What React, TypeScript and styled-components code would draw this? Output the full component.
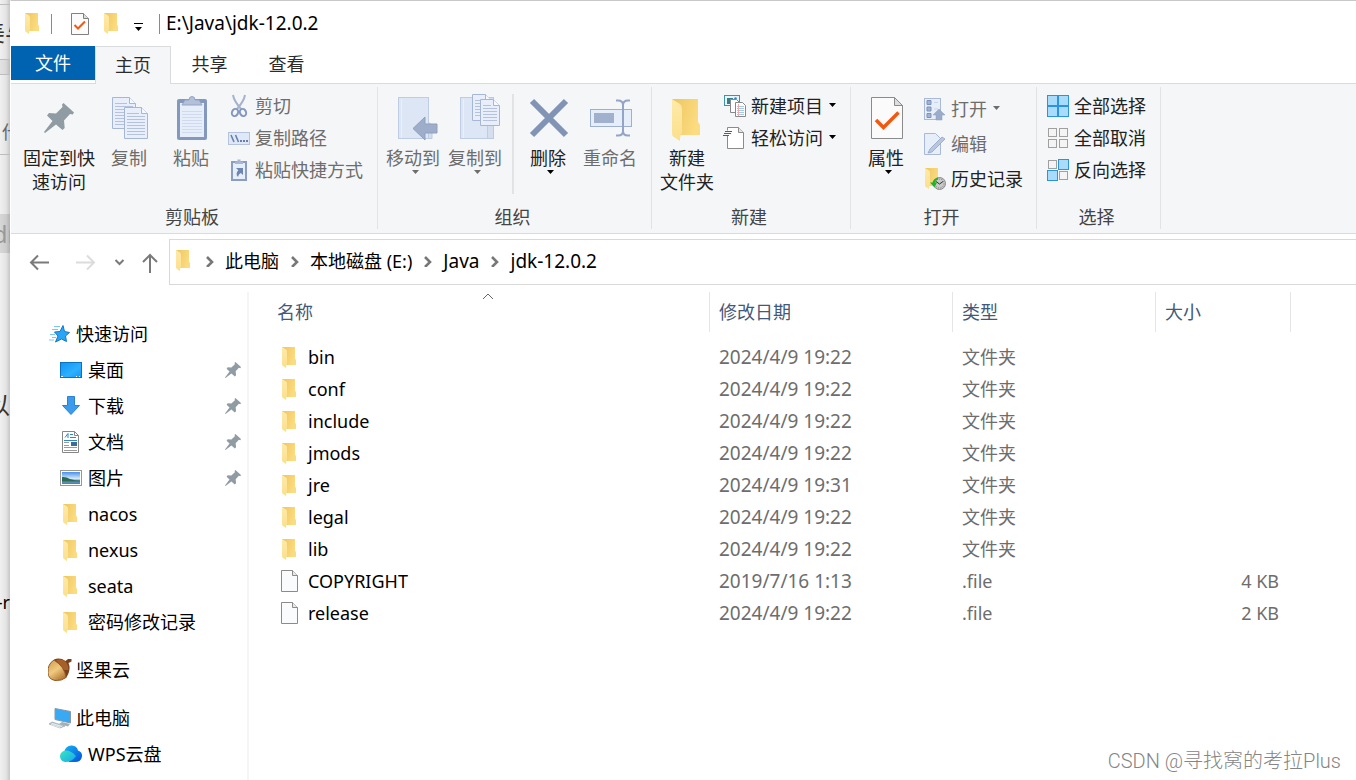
import React from "react";
import styled, { createGlobalStyle } from "styled-components";

const GlobalStyle = createGlobalStyle`
  *, *::before, *::after { box-sizing: border-box; }
  html, body, #root { height: 100%; }
  body {
    margin: 0;
    overflow: hidden;
    background: #fff;
    color: #000;
    font: 18px/24px "Noto Sans", "Noto Sans CJK SC", sans-serif;
  }
  button, input {
    font: inherit;
    color: inherit;
    background: none;
    border: 0;
    padding: 0;
    margin: 0;
  }
  svg { display: block; flex: none; }
`;

/* ---------- layout ---------- */

const Desktop = styled.div`
  position: relative;
  display: flex;
  height: 100%;
  min-height: 100vh;
  overflow: hidden;
`;

const BehindWindow = styled.aside`
  flex: 0 0 10px;
  display: flex;
  flex-direction: column;
  overflow: hidden;
  background: linear-gradient(to right, #f0f0f0, #e4e4e4 60%, #c6c6c6);
  white-space: nowrap;
`;

const BehindStrip = styled.div<{
  $height: number;
  $shade?: string;
  $line?: boolean;
  $align?: string;
  $color?: string;
  $large?: boolean;
}>`
  flex: none;
  height: ${(p) => p.$height}px;
  display: flex;
  align-items: center;
  justify-content: ${(p) => p.$align || "flex-start"};
  background: ${(p) => p.$shade || "transparent"};
  border-bottom: ${(p) => (p.$line ? "1px solid #bdbdbd" : "0")};
  color: ${(p) => p.$color || "#333"};
  font-size: ${(p) => (p.$large ? 24 : 18)}px;
  overflow: hidden;
`;

const Window = styled.main`
  flex: 1;
  min-width: 0;
  display: flex;
  flex-direction: column;
  background: #fff;
  border-top: 1px solid #c8c8c8;
  border-left: 1px solid #fff;
`;

const TitleBar = styled.header`
  flex: none;
  height: 45px;
  display: flex;
  align-items: center;
  padding-left: 14px;
`;

const TitleTool = styled.button<{ $gap: number }>`
  height: 24px;
  display: flex;
  align-items: center;
  margin-right: ${(p) => p.$gap}px;
`;

const TitleDivider = styled.span<{ $gap: number }>`
  width: 1px;
  height: 20px;
  background: #8a8a8a;
  margin-right: ${(p) => p.$gap}px;
`;

const Title = styled.h1`
  margin: 0;
  padding-bottom: 2px;
  font-size: 19px;
  font-weight: 400;
  line-height: 24px;
`;

const TabBar = styled.nav`
  flex: none;
  display: flex;
  height: 38px;
  border-bottom: 1px solid #dadbdc;
`;

const FileTab = styled.button`
  width: 84px;
  height: 34px;
  color: #fff;
  background: #0063b1;
`;

const Tab = styled.button<{ $active?: boolean }>`
  width: ${(p) => (p.$active ? 76 : 77)}px;
  height: 38px;
  padding-bottom: 2px;
  color: #2b2b2b;
  background: ${(p) => (p.$active ? "#f5f6f7" : "transparent")};
  border: ${(p) => (p.$active ? "1px solid #dadbdc" : "0")};
  border-bottom: 0;
`;

const Ribbon = styled.section`
  flex: none;
  display: flex;
  height: 150px;
  padding: 3px 0 4px;
  background: #f5f6f7;
  border-bottom: 1px solid #dadbdc;
`;

const Group = styled.div<{ $width: number }>`
  flex: none;
  width: ${(p) => p.$width}px;
  display: flex;
  flex-direction: column;
  justify-content: space-between;
  border-right: 1px solid #e2e3e4;
`;

const GroupTools = styled.div<{ $inset?: number }>`
  display: flex;
  align-items: flex-start;
  padding-left: ${(p) => p.$inset || 0}px;
`;

const GroupName = styled.div`
  color: #444;
  text-align: center;
  padding-right: 4px;
`;

const BigButton = styled.button<{ $width: number }>`
  width: ${(p) => p.$width}px;
  padding-top: 7px;
  display: flex;
  flex-direction: column;
  align-items: center;
  color: #222;
  line-height: 24px;
  white-space: nowrap;
  &:disabled { color: #6d6d6d; }
  & > span { margin-top: 4px; }
`;

const InnerDivider = styled.span`
  width: 2px;
  height: 100px;
  margin: 7px 3px 0 6px;
  background: #e2e3e4;
`;

const SmallColumn = styled.div<{ $inset: number; $top: number }>`
  padding: ${(p) => p.$top}px 0 0 ${(p) => p.$inset}px;
  display: flex;
  flex-direction: column;
  align-items: flex-start;
`;

const SmallButton = styled.button<{ $height: number }>`
  height: ${(p) => p.$height}px;
  display: flex;
  align-items: center;
  gap: 4px;
  color: #222;
  white-space: nowrap;
  &:disabled { color: #6d6d6d; }
`;

const AddressRow = styled.div`
  flex: none;
  display: flex;
  padding: 5px 0 7px;
`;

const HistoryButtons = styled.div`
  flex: 0 0 158px;
  display: flex;
  align-items: center;
  padding-left: 16px;
`;

const HistoryButton = styled.button<{ $gap: number }>`
  margin-right: ${(p) => p.$gap}px;
`;

const AddressBox = styled.div`
  flex: 1;
  min-width: 0;
  height: 46px;
  display: flex;
  align-items: center;
  padding: 0 0 2px 6px;
  border: 1px solid #d9d9d9;
  border-right: 0;
  white-space: nowrap;
`;

const Crumb = styled.a<{ $large?: boolean }>`
  color: #000;
  font-size: ${(p) => (p.$large ? 19 : 18)}px;
  text-decoration: none;
`;

const CrumbArrow = styled.span`
  margin: 0 10px 0 11px;
`;

const AddressIcon = styled.span`
  margin-right: 4px;
`;

const Content = styled.div`
  flex: 1;
  min-height: 0;
  display: flex;
`;

const SidePane = styled.nav`
  flex: 0 0 238px;
  border-right: 2px solid #f5f5f5;
  padding-top: 24px;
  overflow: hidden;
`;

const SideSection = styled.div`
  margin-bottom: 12px;
`;

const SideItem = styled.a<{ $child?: boolean }>`
  height: 36px;
  display: flex;
  align-items: center;
  gap: 4px;
  padding: 0 6px 0 ${(p) => (p.$child ? 49 : 37)}px;
  color: #000;
  text-decoration: none;
  white-space: nowrap;
  & > span { flex: 1; }
`;

const ListPane = styled.div`
  flex: 1;
  min-width: 0;
  padding-left: 18px;
  overflow: hidden;
`;

const FileTable = styled.table`
  width: 1024px;
  table-layout: fixed;
  border-collapse: separate;
  border-spacing: 0;
  text-align: left;
`;

const HeadCell = styled.th<{ $width: number }>`
  position: relative;
  width: ${(p) => p.$width}px;
  height: 40px;
  padding: 0 0 0 9px;
  font-weight: 400;
  color: #43597a;
  border-right: 1px solid #e5e5e5;
  &:first-child { padding-left: 10px; }
`;

const SortMark = styled.span`
  position: absolute;
  top: 0;
  left: 50%;
  margin-left: -6px;
`;

const BodyGap = styled.tbody`
  &::before { content: ""; display: block; height: 9px; }
`;

const Cell = styled.td<{ $right?: boolean; $large?: boolean }>`
  height: 32px;
  padding: 0 ${(p) => (p.$right ? 12 : 0)}px 0 9px;
  color: #6d6d6d;
  font-size: ${(p) => (p.$large ? 19 : 18)}px;
  text-align: ${(p) => (p.$right ? "right" : "left")};
  white-space: nowrap;
  &:first-child { padding-left: 10px; }
`;

const FileName = styled.a`
  display: flex;
  align-items: center;
  gap: 7px;
  color: #000;
  text-decoration: none;
`;

const Watermark = styled.div`
  position: absolute;
  right: 15px;
  bottom: 7px;
  color: #858585;
  font: 300 20px/24px Roboto, "Noto Sans CJK SC", sans-serif;
  text-shadow: 1px 1px 0 #fff;
`;

/* ---------- icons ---------- */

const FolderShape = () => (
  <>
    <path d="M0 0H13V11.500L14 13V18H3Z" fill="url(#folderBack)" />
    <path d="M0 0L4 2.500Q5 3.200 5 5V17Q4 17.500 4 21L1 19Q0 18.500 0 17Z" fill="url(#folderFlap)" />
  </>
);

const HiddenSvg = styled.svg`
  position: absolute;
`;

const Gradients = () => (
  <HiddenSvg width="0" height="0" aria-hidden="true">
    <defs>
      <linearGradient id="folderBack" x1="0" y1="0" x2="1" y2="0.400">
        <stop offset="0" stopColor="#ecc55f" />
        <stop offset="1" stopColor="#fcdc80" />
      </linearGradient>
      <linearGradient id="folderFlap" x1="0" y1="0" x2="0" y2="1">
        <stop offset="0" stopColor="#ffeaa8" />
        <stop offset="1" stopColor="#fbdf8c" />
      </linearGradient>
      <linearGradient id="deskBlue" x1="0" y1="0" x2="1" y2="1">
        <stop offset="0" stopColor="#0c95f4" />
        <stop offset="0.600" stopColor="#2fb0ff" />
        <stop offset="1" stopColor="#1298f5" />
      </linearGradient>
      <linearGradient id="nutFace" x1="0" y1="0" x2="0.600" y2="1">
        <stop offset="0" stopColor="#d19a4c" />
        <stop offset="0.550" stopColor="#efca80" />
        <stop offset="1" stopColor="#b87c38" />
      </linearGradient>
      <linearGradient id="cloudLeft" x1="0" y1="0" x2="1" y2="1">
        <stop offset="0" stopColor="#35e8c0" />
        <stop offset="1" stopColor="#16a6ee" />
      </linearGradient>
      <linearGradient id="cloudRight" x1="0" y1="0" x2="1" y2="1">
        <stop offset="0" stopColor="#16b4f6" />
        <stop offset="1" stopColor="#0350d8" />
      </linearGradient>
      <linearGradient id="picSky" x1="0" y1="0" x2="0" y2="1">
        <stop offset="0" stopColor="#4a90e8" />
        <stop offset="0.550" stopColor="#d4e8fa" />
        <stop offset="0.700" stopColor="#6f9fc4" />
        <stop offset="1" stopColor="#4a7fae" />
      </linearGradient>
    </defs>
  </HiddenSvg>
);

const FolderIcon = () => (
  <svg width="14" height="22" viewBox="0 0 14 22"><FolderShape /></svg>
);

const Folder24 = () => (
  <svg width="24" height="24" viewBox="0 0 24 24"><g transform="translate(3 2)"><FolderShape /></g></svg>
);

const PinPath = "M19.500 0L30 9.500L28.700 11.500L26 11L20 17.500L20.700 25L18.500 27L12 21.500L1 30L0 29L8.500 18L3 12.500L5 10L12 10.500L18.500 4L18 1.500Z";

const SmallPin = () => (
  <svg width="16" height="16" viewBox="0 0 30 30"><path d={PinPath} fill="#909ca4" /></svg>
);

const Big = ({ children }: { children: React.ReactNode }) => (
  <svg width="62" height="48" viewBox="0 0 62 48" fill="none">{children}</svg>
);
const Small = ({ children }: { children: React.ReactNode }) => (
  <svg width="24" height="24" viewBox="0 0 24 24" fill="none">{children}</svg>
);

const Page = ({ x, y, w, h, n }: { x: number; y: number; w: number; h: number; n: number }) => (
  <g transform={`translate(${x} ${y})`}>
    <path d={`M.500 .500H${w - 6.5}L${w - 0.5} 6.500V${h - 0.5}H.500Z`} fill="#e9effa" stroke="#a6b7d6" />
    <path d={`M${w - 6.5} .500V6.500H${w - 0.5}`} fill="#f6f9fe" stroke="#a6b7d6" />
    {Array.from({ length: n }, (_, i) => (
      <path key={i} d={`M3 ${6.5 + i * 3}H${i < 1 ? w - 9 : w - 3}`} stroke="#b4c2dc" />
    ))}
  </g>
);

const BigPinIcon = () => <Big><path transform="translate(16 9)" d={PinPath} fill="#909ca4" /></Big>;
const CopyIcon = () => (
  <Big><Page x={14} y={3} w={24} h={32} n={8} /><Page x={26} y={13} w={24} h={32} n={8} /></Big>
);
const PasteIcon = () => (
  <Big>
    <rect x="17" y="5" width="30" height="41" rx="2" fill="#8498bd" />
    <rect x="20" y="9" width="24" height="34" fill="#e6eefa" />
    {Array.from({ length: 8 }, (_, i) => <path key={i} d={`M22 ${17.5 + i * 3}H42`} stroke="#cfdaec" />)}
    <path d="M22 11L25 6H29Q29 2.500 32 2.500T35 6H39L42 11Z" fill="#b3c0d8" stroke="#93a4c4" />
  </Big>
);
const MoveIcon = () => (
  <Big>
    <path d="M42 25L50 31V44.500H42Z" fill="#d3deee" stroke="#bccade" />
    <rect x="16.500" y="3.500" width="30" height="41" fill="#dce6f5" stroke="#bfcde4" />
    <path d="M19.500 5V44" stroke="#e9f0fa" />
    <path d="M31 34.500L43 23V30H55V39H43V46Z" fill="#9dadca" stroke="#8fa1c1" />
  </Big>
);
const CopyToIcon = () => (
  <Big>
    <rect x="16.500" y="3.500" width="33" height="41" fill="#d3deee" stroke="#bccade" />
    <rect x="16.500" y="3.500" width="27" height="41" fill="#dce6f5" stroke="#bfcde4" />
    <path d="M19.500 5V44" stroke="#e9f0fa" />
    <Page x={28} y={0} w={20} h={27} n={6} /><Page x={36} y={5} w={20} h={27} n={6} />
  </Big>
);
const DeleteIcon = () => (
  <Big><path d="M15 7L49 41M49 7L15 41" stroke="#8294b6" strokeWidth="6" /></Big>
);
const RenameIcon = () => (
  <Big>
    <rect x="11.500" y="15.500" width="41" height="17" fill="#e6eefa" stroke="#9db0d2" />
    <rect x="15" y="19" width="20" height="10" fill="#a0b0cd" />
    <path d="M37 6.500H39Q44 6.500 44 11V37Q44 41.500 39 41.500H37M51 6.500H49Q44 6.500 44 11V37Q44 41.500 49 41.500H51" stroke="#93a5c6" strokeWidth="2" />
  </Big>
);
const NewFolderIcon = () => (
  <Big><g transform="translate(16 5) scale(2)"><FolderShape /></g></Big>
);
const PropertiesIcon = () => (
  <Big>
    <path d="M16.500 3.500H39.500L47.500 11.500V44.500H16.500Z" fill="#fbfbfc" stroke="#8b8b8b" />
    <path d="M39.500 3.500V11.500H47.500Z" fill="#dedede" stroke="#8b8b8b" />
    <path d="M21 26L28.500 33.500L43.500 18.500" stroke="#f0590f" strokeWidth="3.500" />
  </Big>
);

const ScissorsIcon = () => (
  <Small>
    <path d="M6 1Q7 7 14 15M18 1Q17 7 10 15" stroke="#a5b3cd" strokeWidth="2" />
    <ellipse cx="8" cy="18.500" rx="3" ry="3.700" transform="rotate(25 8 18.500)" stroke="#8398bf" strokeWidth="2" />
    <ellipse cx="16" cy="18.500" rx="3" ry="3.700" transform="rotate(-25 16 18.500)" stroke="#8398bf" strokeWidth="2" />
  </Small>
);
const PathIcon = () => (
  <Small>
    <rect x="1.500" y="6.500" width="21" height="12" fill="#dfe8f6" stroke="#b5c3dc" />
    <path d="M4 9L7 16M8.500 9L11.500 16" stroke="#6b80a8" strokeWidth="1.600" />
    <path d="M13 15H15M16 15H18M19 15H21" stroke="#6b80a8" strokeWidth="2" />
  </Small>
);
const PasteShortcutIcon = () => (
  <Small>
    <rect x="5" y="4" width="14" height="18" fill="#e6eefa" stroke="#8b9ec2" strokeWidth="2" />
    <path d="M8 6V3.500H10.500V1.500H13.500V3.500H16V6Z" fill="#a9b7d2" />
    <path d="M9 10H16V17L13.800 15Q11.500 16 11 19Q8 16 11.300 12.300Z" fill="#6f86b1" />
  </Small>
);
const NewItemIcon = () => (
  <Small>
    <rect x="1.500" y="1.500" width="15" height="10" fill="#e8f6fb" stroke="#3c93b4" />
    <rect x="4" y="4" width="6" height="6" fill="#397a8c" />
    <circle cx="12.500" cy="4.500" r="1.300" fill="#2e86d0" />
    <path d="M7.500 5.500H13.500L16.500 8.500V18.500H7.500Z" fill="#fff" stroke="#888" />
    <path d="M12.500 8.500H19.500L22.500 11.500V22.500H12.500Z" fill="#fff" stroke="#888" />
    <path d="M14 12.500H21M14 14.500H21M14 16.500H21M14 18.500H21M14 20.500H21" stroke="#a8c8e8" />
    <path d="M15.500 10V22" stroke="#e8b0b0" />
  </Small>
);
const EasyAccessIcon = () => (
  <Small>
    <path d="M4.500 1.500H15.500L20.500 6.500V22.500H4.500Z" fill="#fff" stroke="#8b8b8b" />
    <path d="M15.500 1.500V6.500H20.500" fill="#e6e6e6" stroke="#8b8b8b" />
    <path d="M2 4.500H9V9.500H2Z" fill="#f8fafb" />
    <path d="M2 5.500H9M1 7.500H8M0 9.500H6" stroke="#1f6da8" />
  </Small>
);
const OpenIcon = () => (
  <Small>
    <rect x="1.500" y="1.500" width="16" height="21" fill="#e6eefa" stroke="#a9b9d6" />
    <path d="M4 3.500H8V7.500H4ZM4 10H8V14H4ZM4 16.500H8V20.500H4Z" fill="#a0b3d4" stroke="#7e93ba" />
    <path d="M11 5.500H15M11 12H15" stroke="#c8d4e8" />
    <path d="M16 12L22 18H19V23H13V18H10Z" fill="#9baccb" stroke="#8b9dbf" strokeWidth=".500" />
  </Small>
);
const EditIcon = () => (
  <Small>
    <path d="M1.500 1.500H12.500L17.500 6.500V22.500H1.500Z" fill="#e6eefa" stroke="#a9b9d6" />
    <path d="M5 21L7 17L19 5L22 7L9 20Z" fill="#b9c6dd" stroke="#91a3c4" strokeWidth=".800" />
  </Small>
);
const HistoryIcon = () => (
  <Small>
    <g transform="translate(2 1)"><FolderShape /></g>
    <circle cx="16.500" cy="16.500" r="6" fill="#c9c9c9" stroke="#8a8a8a" />
    <circle cx="16.500" cy="16.500" r="4.500" stroke="#777" strokeDasharray="1 1.500" />
    <path d="M16.500 17L13 14.500M16.500 17L20 14.500" stroke="#333" />
    <path d="M15 10.500Q10.500 11.500 9.500 15.500H7L11.500 20.500L14 15.500H12Q12.500 13 15 12.500Z" fill="#25b02d" />
  </Small>
);

const SelectIcon = ({ on }: { on: boolean[] }) => (
  <Small>
    {[0, 1, 2, 3].filter((i) => !on[i]).map((i) => (
      <rect key={i} x={(i % 2) * 11 + 2.5} y={(i > 1 ? 11 : 0) + 2.5} width="8" height="8" fill="#f4f4f4" stroke="#a0a0a0" />
    ))}
    {[0, 1, 2, 3].filter((i) => on[i]).map((i) => (
      <rect key={i} x={(i % 2) * 11 + 1.5} y={(i > 1 ? 11 : 0) + 1.5} width="10" height="10" fill="#a9dcfb" stroke="#2a93e4" />
    ))}
  </Small>
);

const Caret = ({ color = "#000" }: { color?: string }) => (
  <svg width="11" height="4" viewBox="0 0 11 4"><path d="M4 0H11L7.500 4Z" fill={color} /></svg>
);
const SideCaret = ({ color = "#000" }: { color?: string }) => (
  <svg width="11" height="8" viewBox="0 0 11 8"><path d="M2 1H9L5.500 5Z" fill={color} /></svg>
);

const TitleCheckIcon = () => (
  <svg width="18" height="22" viewBox="0 0 18 22" fill="none">
    <path d="M.500 .500H12.500L17.500 5.500V21.500H.500Z" fill="#fbfbfc" stroke="#808080" />
    <path d="M12.500 .500V5.500H17.500" fill="#ddd" stroke="#808080" />
    <path d="M3.500 12L7 15.500L14 8.500" stroke="#f0590f" strokeWidth="2" />
  </svg>
);
const CustomizeIcon = () => (
  <svg width="10" height="14" viewBox="0 0 10 14"><path d="M1 6H10V7H1ZM2 10H9L5.500 14Z" fill="#000" /></svg>
);

const ArrowIcon = ({ d, color = "#7a7a7a", width = 24 }: { d: string; color?: string; width?: number }) => (
  <svg width={width} height="24" viewBox={`0 0 ${width} 24`} fill="none" stroke={color} strokeWidth="2"><path d={d} /></svg>
);
const Chevron = () => (
  <svg width="10" height="12" viewBox="0 0 10 12" fill="none" stroke="#777" strokeWidth="2.600"><path d="M2 2L7 7L2 12" /></svg>
);

const StarIcon = () => (
  <Small>
    <path d="M15 3.500L16.500 9.500L21.500 10.500L17.500 14L18.500 19.500L13.500 17L7.500 20L10 14L6.500 10L12 9.500Z" fill="#2aa5f5" stroke="#1278c8" />
    <path d="M6 4.500H12M4 7.500H10M2 12.500H7M4 15.500H8M1 18H6" stroke="#7cc6f4" />
  </Small>
);
const DesktopIcon = () => (
  <Small>
    <rect x=".500" y="4.500" width="21" height="15" fill="url(#deskBlue)" stroke="#0a72c0" />
    <path d="M1 18.500H3M16 18.500H17M19 18.500H20" stroke="#fff" />
  </Small>
);
const DownloadIcon = () => (
  <Small><path d="M7.500 2.500H14.500V11.500H19.500L11 20.500L2.500 11.500H7.500Z" fill="#3c9bec" stroke="#2a82d4" /></Small>
);
const DocIcon = () => (
  <Small>
    <path d="M2.500 1.500H14.500L18.500 5.500V22.500H2.500Z" fill="#fff" stroke="#868686" />
    <path d="M14.500 1.500V5.500H18.500" stroke="#868686" />
    <path d="M5 7.500L8 3.500V8M10 4.500H13M10 7.500H16" stroke="#2b87cc" />
    <path d="M4 10.500H17" stroke="#2b87cc" />
    <path d="M4 12.500H9M4 15.500H9M4 17.500H17M4 20.500H17" stroke="#9a9a9a" />
    <rect x="11" y="12" width="6" height="4" fill="#3c6c94" />
  </Small>
);
const PictureIcon = () => (
  <Small>
    <rect x=".500" y="4.500" width="21" height="15" fill="#fff" stroke="#979797" />
    <rect x="2" y="6" width="18" height="12" fill="url(#picSky)" />
    <path d="M2 11Q6 10.500 10 13Q15 14.500 20 14.500V15.500H2Z" fill="#2c6b50" />
  </Small>
);
const NutIcon = () => (
  <Small>
    <path d="M6 1.500Q12 -1 17.500 3L20 1H23.500V3.500L20.500 5Q23.500 12 18 20L10 14Z" fill="#7a3f1c" />
    <path d="M8 2Q14 0 18 4Q21 8 20.500 12L16 12Z" fill="#a8602a" />
    <path d="M6 2Q-.500 6 0 14.500Q0 21 7 22.500Q14 23 18 19.500Q17 9 6 2Z" fill="url(#nutFace)" stroke="#8f5a28" />
  </Small>
);
const ComputerIcon = () => (
  <Small>
    <path d="M7 2.500L22.500 5.500V17L7 13.500Z" fill="#38aaf5" stroke="#8798a6" />
    <path d="M14 16L22 18L20 20.500L11 18Z" fill="#a3afb8" />
    <path d="M4 16L17 20L12 22L1 18Z" fill="#c3cdd4" stroke="#8d9ba5" strokeWidth=".600" />
    <path d="M4 17.500L14 20.500M3 18.500L12 21.500" stroke="#eef2f5" strokeWidth=".800" />
  </Small>
);
const CloudIcon = () => (
  <Small>
    <path d="M4 10Q6 3 12 3.500Q17 4 18 8.500Q22.500 10 22 14.500Q21 20 15 20H9Z" fill="url(#cloudRight)" />
    <path d="M5 20Q0 19 0 14Q.500 9 6 8.500Q11 8.500 16 14Q12 20 5 20Z" fill="url(#cloudLeft)" />
  </Small>
);
const FileIcon = () => (
  <Small>
    <path d="M4.500 1.500H15.500L20.500 6.500V22.500H4.500Z" fill="#fafbfc" stroke="#8b8b8b" />
    <path d="M15.500 1.500V6.500H20.500" fill="#e9e9e9" stroke="#8b8b8b" />
  </Small>
);
const ListFolder = () => (
  <svg width="24" height="24" viewBox="0 0 24 24"><g transform="translate(5 2)"><FolderShape /></g></svg>
);

/* ---------- data ---------- */

const quickAccess = [
  { name: "桌面", icon: <DesktopIcon />, pinned: true },
  { name: "下载", icon: <DownloadIcon />, pinned: true },
  { name: "文档", icon: <DocIcon />, pinned: true },
  { name: "图片", icon: <PictureIcon />, pinned: true },
  { name: "nacos", icon: <Folder24 /> },
  { name: "nexus", icon: <Folder24 /> },
  { name: "seata", icon: <Folder24 /> },
  { name: "密码修改记录", icon: <Folder24 /> },
];

const files = [
  ["bin", "2024/4/9 19:22", "文件夹", ""],
  ["conf", "2024/4/9 19:22", "文件夹", ""],
  ["include", "2024/4/9 19:22", "文件夹", ""],
  ["jmods", "2024/4/9 19:22", "文件夹", ""],
  ["jre", "2024/4/9 19:31", "文件夹", ""],
  ["legal", "2024/4/9 19:22", "文件夹", ""],
  ["lib", "2024/4/9 19:22", "文件夹", ""],
  ["COPYRIGHT", "2019/7/16 1:13", ".file", "4 KB"],
  ["release", "2024/4/9 19:22", ".file", "2 KB"],
];

const crumbs = ["此电脑", "本地磁盘 (E:)", "Java", "jdk-12.0.2"];

export default function App() {
  return (
    <Desktop>
      <GlobalStyle />
      <Gradients />
      <BehindWindow aria-hidden="true">
        <BehindStrip $height={5} $line />
        <BehindStrip $height={55} $line $align="center" $large>美与</BehindStrip>
        <BehindStrip $height={15} $shade="rgba(0,0,0,.05)" $line />
        <BehindStrip $height={34} />
        <BehindStrip $height={46} $line $color="#666">&#8202;什</BehindStrip>
        <BehindStrip $height={59} />
        <BehindStrip $height={39} $shade="rgba(0,0,0,.1)" $color="#999" $align="center" $large>dr</BehindStrip>
        <BehindStrip $height={304} $align="flex-end" $large>以</BehindStrip>
        <BehindStrip $height={90} $color="#000" $align="flex-end">-r</BehindStrip>
      </BehindWindow>

      <Window>
        <TitleBar>
          <TitleTool $gap={12} aria-label="文件夹"><FolderIcon /></TitleTool>
          <TitleDivider $gap={19} />
          <TitleTool $gap={15} aria-label="属性"><TitleCheckIcon /></TitleTool>
          <TitleTool $gap={15} aria-label="新建文件夹"><FolderIcon /></TitleTool>
          <TitleTool $gap={16} aria-label="自定义"><CustomizeIcon /></TitleTool>
          <TitleDivider $gap={6} />
          <Title>E:\Java\jdk-12.0.2</Title>
        </TitleBar>

        <TabBar>
          <FileTab>文件</FileTab>
          <Tab $active>主页</Tab>
          <Tab>共享</Tab>
          <Tab>查看</Tab>
        </TabBar>

        <Ribbon>
          <Group $width={367}>
            <GroupTools $inset={4}>
              <BigButton $width={88}><BigPinIcon /><span>固定到快<br />速访问</span></BigButton>
              <BigButton $width={52} disabled><CopyIcon /><span>复制</span></BigButton>
              <BigButton $width={72} disabled><PasteIcon /><span>粘贴</span></BigButton>
              <SmallColumn $inset={0} $top={3}>
                <SmallButton $height={32} disabled><ScissorsIcon />剪切</SmallButton>
                <SmallButton $height={32} disabled><PathIcon />复制路径</SmallButton>
                <SmallButton $height={32} disabled><PasteShortcutIcon />粘贴快捷方式</SmallButton>
              </SmallColumn>
            </GroupTools>
            <GroupName>剪贴板</GroupName>
          </Group>

          <Group $width={274}>
            <GroupTools $inset={4}>
              <BigButton $width={62} disabled><MoveIcon /><span>移动到</span><Caret color="#6d6d6d" /></BigButton>
              <BigButton $width={62} disabled><CopyToIcon /><span>复制到</span><Caret color="#6d6d6d" /></BigButton>
              <InnerDivider />
              <BigButton $width={62}><DeleteIcon /><span>删除</span><Caret /></BigButton>
              <BigButton $width={62} disabled><RenameIcon /><span>重命名</span></BigButton>
            </GroupTools>
            <GroupName>组织</GroupName>
          </Group>

          <Group $width={199}>
            <GroupTools>
              <BigButton $width={70}><NewFolderIcon /><span>新建<br />文件夹</span></BigButton>
              <SmallColumn $inset={1} $top={3}>
                <SmallButton $height={32}><NewItemIcon />新建项目<SideCaret /></SmallButton>
                <SmallButton $height={32}><EasyAccessIcon />轻松访问<SideCaret /></SmallButton>
              </SmallColumn>
            </GroupTools>
            <GroupName>新建</GroupName>
          </Group>

          <Group $width={186}>
            <GroupTools>
              <BigButton $width={70}><PropertiesIcon /><span>属性</span><Caret /></BigButton>
              <SmallColumn $inset={2} $top={4}>
                <SmallButton $height={35} disabled><OpenIcon />打开<SideCaret color="#6d6d6d" /></SmallButton>
                <SmallButton $height={35} disabled><EditIcon />编辑</SmallButton>
                <SmallButton $height={35}><HistoryIcon />历史记录</SmallButton>
              </SmallColumn>
            </GroupTools>
            <GroupName>打开</GroupName>
          </Group>

          <Group $width={124}>
            <GroupTools>
              <SmallColumn $inset={9} $top={3}>
                <SmallButton $height={32}><SelectIcon on={[true, true, true, true]} />全部选择</SmallButton>
                <SmallButton $height={32}><SelectIcon on={[false, false, false, false]} />全部取消</SmallButton>
                <SmallButton $height={32}><SelectIcon on={[false, true, true, false]} />反向选择</SmallButton>
              </SmallColumn>
            </GroupTools>
            <GroupName>选择</GroupName>
          </Group>
        </Ribbon>

        <AddressRow>
          <HistoryButtons>
            <HistoryButton $gap={22} aria-label="返回"><ArrowIcon d="M22 12.500H4M11 5.500L4 12.500L11 19.500" /></HistoryButton>
            <HistoryButton $gap={17} aria-label="前进"><ArrowIcon color="#dcdcdc" d="M3 12.500H21M14 5.500L21 12.500L14 19.500" /></HistoryButton>
            <HistoryButton $gap={12} aria-label="最近位置"><ArrowIcon width={12} d="M1.500 10L5.500 14L9.500 10" /></HistoryButton>
            <HistoryButton $gap={0} aria-label="向上"><ArrowIcon d="M12 23V5M5 12L12 5L19 12" /></HistoryButton>
          </HistoryButtons>
          <AddressBox>
            <AddressIcon><FolderIcon /></AddressIcon>
            {crumbs.map((c) => (
              <React.Fragment key={c}>
                <CrumbArrow><Chevron /></CrumbArrow>
                <Crumb href="#" $large={/^\w/.test(c)}>{c}</Crumb>
              </React.Fragment>
            ))}
          </AddressBox>
        </AddressRow>

        <Content>
          <SidePane>
            <SideSection>
              <SideItem href="#"><StarIcon /><span>快速访问</span></SideItem>
              {quickAccess.map((q) => (
                <SideItem href="#" $child key={q.name}>
                  {q.icon}<span>{q.name}</span>{q.pinned && <SmallPin />}
                </SideItem>
              ))}
            </SideSection>
            <SideSection>
              <SideItem href="#"><NutIcon /><span>坚果云</span></SideItem>
            </SideSection>
            <SideSection>
              <SideItem href="#"><ComputerIcon /><span>此电脑</span></SideItem>
              <SideItem href="#" $child><CloudIcon /><span>WPS云盘</span></SideItem>
            </SideSection>
          </SidePane>

          <ListPane>
            <FileTable>
              <thead>
                <tr>
                  <HeadCell $width={443}>
                    名称
                    <SortMark>
                      <svg width="12" height="8" viewBox="0 0 12 8" fill="none" stroke="#666"><path d="M1 7L6 2L11 7" /></svg>
                    </SortMark>
                  </HeadCell>
                  <HeadCell $width={243}>修改日期</HeadCell>
                  <HeadCell $width={203}>类型</HeadCell>
                  <HeadCell $width={135}>大小</HeadCell>
                </tr>
              </thead>
              <BodyGap>
                {files.map(([name, date, type, size]) => (
                  <tr key={name}>
                    <Cell>
                      <FileName href="#">{type === ".file" ? <FileIcon /> : <ListFolder />}{name}</FileName>
                    </Cell>
                    <Cell $large>{date}</Cell>
                    <Cell>{type}</Cell>
                    <Cell $right>{size}</Cell>
                  </tr>
                ))}
              </BodyGap>
            </FileTable>
          </ListPane>
        </Content>
      </Window>
      <Watermark>CSDN @寻找窝的考拉Plus</Watermark>
    </Desktop>
  );
}
